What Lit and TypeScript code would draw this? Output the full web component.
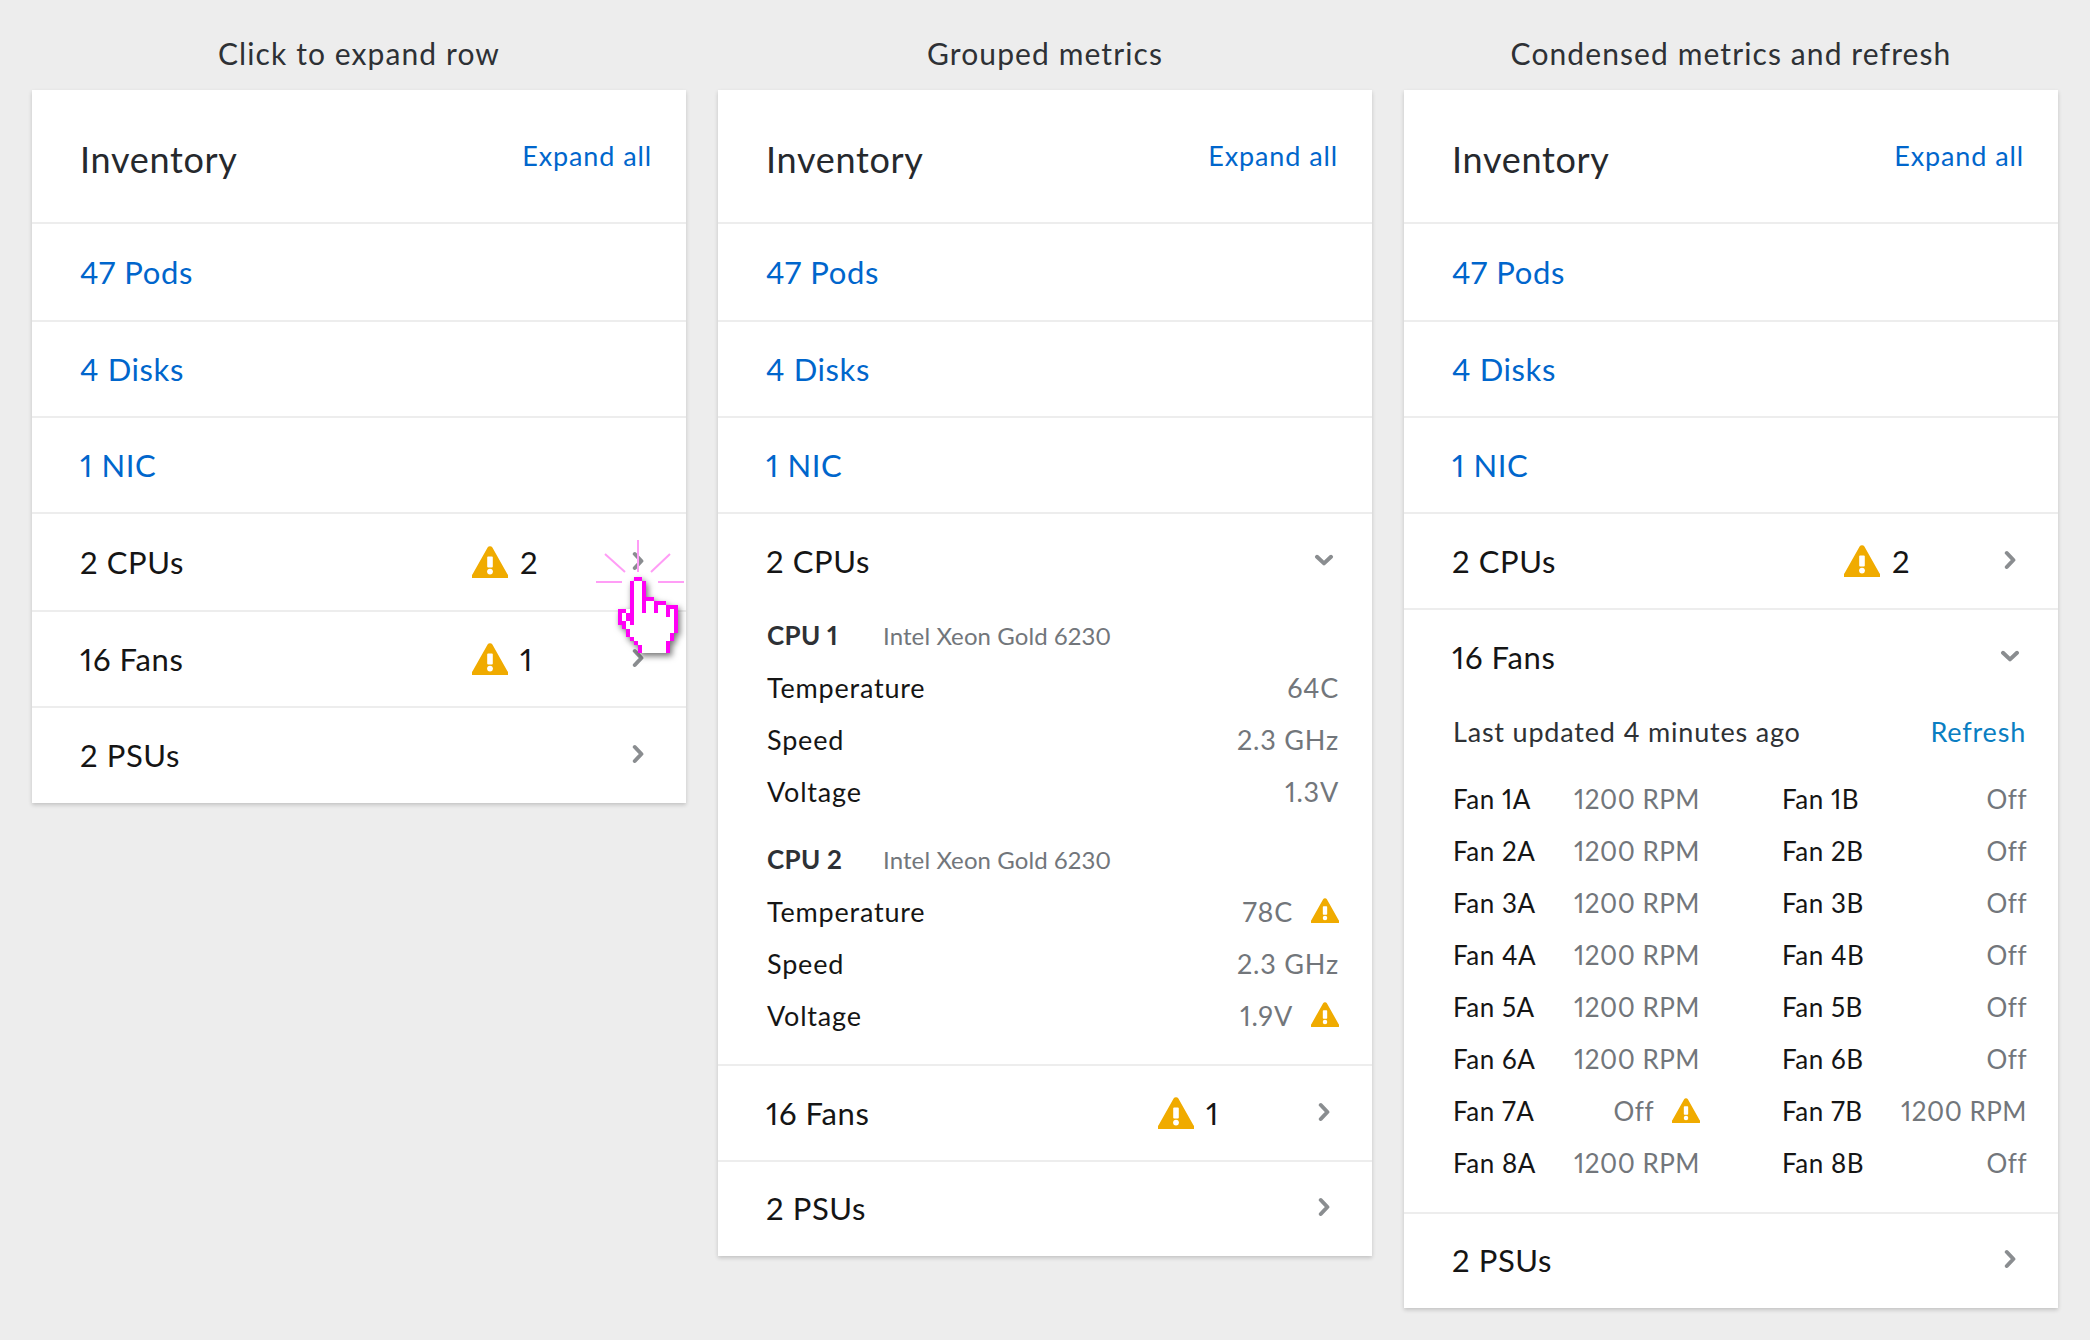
import { LitElement, html, css, svg } from 'lit';
import { customElement } from 'lit/decorators.js';

const warn = (small = false) => html`<svg class=${small ? 'warn small' : 'warn'} viewBox="0 0 36 32">
  <path fill="#f0ab00" d="M15.6 1.5a2.8 2.8 0 0 1 4.8 0l15.2 27a1.9 1.9 0 0 1-1.7 3.5H2.1a1.9 1.9 0 0 1-1.7-3.5z" />
  <rect x="15.2" y="10.5" width="5.6" height="11" rx="1" fill="#fff" />
  <circle cx="18" cy="25.6" r="2.9" fill="#fff" />
</svg>`;

const chevron = (open = false) => html`<svg class=${open ? 'chev open' : 'chev'} viewBox="0 0 12 20">
  <path d="M2.8 3 9.4 10 2.8 17" fill="none" stroke="#8a8d90" stroke-width="4" stroke-linecap="round" stroke-linejoin="round" />
</svg>`;

// pointer hand, one unit is 4px in the reference
const handPixels: [number, number, number, number][] = [
  [4, 0, 2, 1], [3, 1, 1, 11], [6, 1, 1, 8], [7, 5, 2, 1], [9, 6, 1, 3], [10, 6, 2, 1], [12, 7, 1, 3], [13, 7, 1, 1],
  [14, 7, 1, 7], [0, 8, 2, 1], [0, 9, 1, 3], [2, 9, 1, 2], [1, 11, 1, 2], [2, 13, 1, 2], [3, 15, 1, 1], [4, 16, 1, 1],
  [5, 17, 1, 2], [13, 14, 1, 2], [12, 16, 1, 3],
];

const hand = html`<svg class="hand" viewBox="0 0 15 19" shape-rendering="crispEdges">
  <path fill="#fff" d="M4 0h2v1h1v4h2v1h3v1h3v7h-1v2h-1v3H5v-2H4v-1H3v-2H2v-2H1v-1H0V8h3V1h1z" />
  ${handPixels.map(([x, y, w, h]) => svg`<rect x=${x} y=${y} width=${w} height=${h} fill="#ff00f5" />`)}
</svg>`;

const sparks = html`<svg class="sparks" viewBox="0 0 96 46">
  <path d="M46 0v32M4 42h26M66 42h26M13 14l20 18M78 14 59 32" fill="none" stroke="#ff9df6" stroke-width="2" />
</svg>`;

@customElement('app-root')
export class AppRoot extends LitElement {
  static styles = css`
    :host {
      display: block;
      min-height: 1340px;
      background: #ededed;
      color: #151515;
      font-family: Lato, 'Noto Sans', sans-serif;
      font-variant-numeric: proportional-nums;
    }
    .page {
      display: grid;
      grid-template-columns: repeat(3, 654px);
      column-gap: 32px;
      padding: 0 32px;
      align-items: start;
    }
    .col { position: relative; }
    h2 {
      margin: 0;
      height: 90px;
      line-height: 106px;
      text-align: center;
      font-size: 30px;
      font-weight: 400;
      letter-spacing: 1.1px;
      color: #2e3135;
    }
    .card {
      background: #fff;
      box-shadow: 0 2px 4px rgba(3, 3, 3, 0.18);
    }
    .head {
      box-sizing: border-box;
      height: 134px;
      padding: 47px 34px 0 48px;
      display: flex;
      justify-content: space-between;
      border-bottom: 2px solid #ededed;
    }
    h1 {
      margin: 0;
      font-size: 36px;
      line-height: 44px;
      font-weight: 400;
      letter-spacing: 0.7px;
      color: #26292d;
    }
    a { color: #06c; text-decoration: none; }
    .expand { margin-top: 1px; font-size: 27px; line-height: 36px; letter-spacing: 0.9px; }
    .row {
      box-sizing: border-box;
      height: 96px;
      padding-left: 48px;
      display: grid;
      grid-template-columns: 392px 1fr 64px;
      align-items: center;
      font-size: 31px;
      letter-spacing: 0.6px;
      border-bottom: 2px solid #ededed;
    }
    .row.first { height: 98px; }
    .row.tall { height: 98px; }
    .card > .row:last-child { height: 94px; padding-bottom: 2px; border-bottom: 0; }
    .card > .row.end-tall:last-child { height: 95px; }
    .row.link a { grid-column: 1 / -1; }
    .status { display: flex; align-items: center; gap: 12px; }
    .warn { width: 36px; height: 32px; display: block; flex: none; }
    .warn.small { width: 28px; height: 25px; margin-top: -2px; }
    .chev { width: 12px; height: 20px; display: block; margin-left: 10px; margin-top: -2px; }
    .chev.open { transform: rotate(90deg); }
    .section { border-bottom: 2px solid #ededed; }
    .section .row { border-bottom: 0; height: 94px; }
    .body { padding: 1px 33px 23px 49px; font-size: 27px; letter-spacing: 0.8px; }
    .grp { margin-bottom: 16px; }
    .grp:last-child { margin-bottom: 0; }
    .cpu, .metric { height: 52px; display: flex; align-items: center; }
    .metric { justify-content: space-between; }
    .cpu b { width: 116px; font-size: 26px; font-weight: 700; letter-spacing: 0.3px; color: #2e3135; }
    .cpu span { font-size: 24px; letter-spacing: 0.1px; color: #72767b; }
    .val { display: flex; align-items: center; gap: 18px; color: #72767b; }
    .updated {
      display: flex;
      justify-content: space-between;
      align-items: center;
      height: 58px;
      margin-top: -2px;
      color: #2e3135;
    }
    .refresh { color: #0a7ec2; }
    .fans {
      display: grid;
      grid-template-columns: 247px 245px;
      justify-content: space-between;
      margin: 13px -1px 0 0;
      font-size: 26px;
      letter-spacing: 0.5px;
    }
    .body.fan-body { padding: 0 32px 23px 49px; }
    .hand {
      position: absolute;
      left: 586px;
      top: 577px;
      width: 60px;
      height: 76px;
      filter: drop-shadow(2px 3px 3px rgba(0, 0, 0, 0.55));
    }
    .sparks {
      position: absolute;
      left: 560px;
      top: 540px;
      width: 96px;
      height: 46px;
    }
  `;

  private links() {
    return html`
      <div class="head"><h1>Inventory</h1><a class="expand" href="#">Expand all</a></div>
      <div class="row link first"><a href="#">47 Pods</a></div>
      <div class="row link"><a href="#">4 Disks</a></div>
      <div class="row link"><a href="#">1 NIC</a></div>
    `;
  }

  private row(label: string, count?: number, cls = '') {
    return html`<div class="row ${cls}">
      <span>${label}</span>
      <span class="status">${count ? html`${warn()}<span>${count}</span>` : ''}</span>
      ${chevron()}
    </div>`;
  }

  private metric(label: string, value: string, alert = false) {
    return html`<div class="metric">
      <span>${label}</span>
      <span class="val">${value}${alert ? warn(true) : ''}</span>
    </div>`;
  }

  private cpu(name: string, temp: string, volt: string, alert: boolean) {
    return html`<div class="grp">
      <div class="cpu"><b>${name}</b><span>Intel Xeon Gold 6230</span></div>
      ${this.metric('Temperature', temp, alert)}
      ${this.metric('Speed', '2.3 GHz')}
      ${this.metric('Voltage', volt, alert)}
    </div>`;
  }

  private fans() {
    const rows = [];
    for (let i = 1; i <= 8; i++) {
      const seven = i === 7;
      rows.push(this.metric(`Fan ${i}A`, seven ? 'Off' : '1200 RPM', seven));
      rows.push(this.metric(`Fan ${i}B`, seven ? '1200 RPM' : 'Off'));
    }
    return rows;
  }

  render() {
    return html`<div class="page">
      <div class="col">
        <h2>Click to expand row</h2>
        <div class="card">
          ${this.links()}
          ${this.row('2 CPUs', 2, 'tall')}
          ${this.row('16 Fans', 1)}
          ${this.row('2 PSUs', undefined, 'end-tall')}
        </div>
        ${sparks}${hand}
      </div>
      <div class="col">
        <h2>Grouped metrics</h2>
        <div class="card">
          ${this.links()}
          <div class="section">
            <div class="row"><span>2 CPUs</span><span></span>${chevron(true)}</div>
            <div class="body">
              ${this.cpu('CPU 1', '64C', '1.3V', false)}
              ${this.cpu('CPU 2', '78C', '1.9V', true)}
            </div>
          </div>
          ${this.row('16 Fans', 1)}
          ${this.row('2 PSUs')}
        </div>
      </div>
      <div class="col">
        <h2>Condensed metrics and refresh</h2>
        <div class="card">
          ${this.links()}
          ${this.row('2 CPUs', 2)}
          <div class="section">
            <div class="row"><span>16 Fans</span><span></span>${chevron(true)}</div>
            <div class="body fan-body">
              <div class="updated"><span>Last updated 4 minutes ago</span><a class="refresh" href="#">Refresh</a></div>
              <div class="fans">${this.fans()}</div>
            </div>
          </div>
          ${this.row('2 PSUs')}
        </div>
      </div>
    </div>`;
  }
}
